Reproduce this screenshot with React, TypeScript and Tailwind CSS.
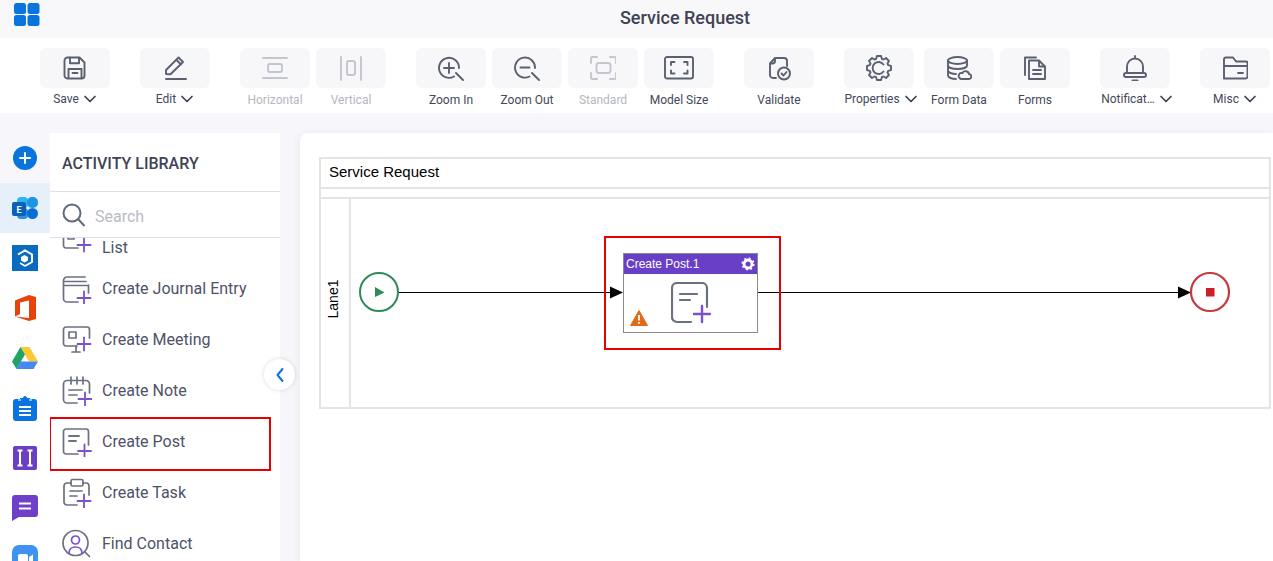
import type { ReactNode } from "react";

const Ico = ({ children, stroke = "#5b6070", size = 26 }: { children: ReactNode; stroke?: string; size?: number }) => (
  <svg width={size} height={size} viewBox="0 0 26 26" fill="none" stroke={stroke} strokeWidth="1.9" strokeLinecap="round" strokeLinejoin="round">
    {children}
  </svg>
);

const Chevron = () => (
  <svg width="14" height="8" viewBox="0 0 14 8" fill="none" stroke="#3f4254" strokeWidth="1.7" strokeLinecap="round" strokeLinejoin="round" className="shrink-0">
    <path d="M2 1.5 7 6.5 12 1.5" />
  </svg>
);

const Plus = ({ x = 0, y = 0 }: { x?: number; y?: number }) => (
  <path d={`M${x} ${y - 6.5}v13M${x - 6.5} ${y}h13`} stroke="#7b4fd0" strokeWidth="1.8" />
);

// 8 tooth gear outline for the Properties button
const gearPath = () => {
  const pts: string[] = [];
  for (let i = 0; i < 8; i++) {
    const a = (i * Math.PI) / 4;
    [[9.6, -0.3], [12.2, -0.17], [12.2, 0.17], [9.6, 0.3]].forEach(([r, d]) => {
      pts.push(`${(13 + r * Math.cos(a + d)).toFixed(2)} ${(13 + r * Math.sin(a + d)).toFixed(2)}`);
    });
  }
  return `M${pts.join("L")}Z`;
};

type Tool = { label: string; icon: ReactNode; menu?: boolean; off?: boolean; nudge?: string; ml?: string };

const tools: Tool[] = [
  {
    label: "Save",
    menu: true,
    icon: (
      <Ico>
        <path d="M5.5 2.5h12l5 5v13a3 3 0 0 1-3 3h-14a3 3 0 0 1-3-3v-15a3 3 0 0 1 3-3Z" />
        <path d="M8 2.8v5.4h9V2.8M6.5 23v-9h13v9M10.500 18h5" />
      </Ico>
    ),
  },
  {
    label: "Edit",
    menu: true,
    ml: "ml-[30px]",
    icon: (
      <Ico>
        <path d="M4 19v-4L16.500 2.500l4.500 4.500L8.500 19.200 4 19ZM14.500 5l4.500 4.500" />
        <path d="M4 24h20" strokeWidth="2" />
      </Ico>
    ),
  },
  {
    label: "Horizontal",
    off: true,
    ml: "ml-[30px]",
    icon: (
      <Ico stroke="#c3c5cf">
        <path d="M1 3h24M1 23h24" />
        <rect x="6" y="9" width="14" height="8" rx="2" />
      </Ico>
    ),
  },
  {
    label: "Vertical",
    off: true,
    ml: "ml-[6px]",
    icon: (
      <Ico stroke="#c3c5cf">
        <path d="M3 2v23M23 2v23" />
        <rect x="9" y="6" width="8" height="14" rx="2" />
      </Ico>
    ),
  },
  {
    label: "Zoom In",
    ml: "ml-[30px]",
    icon: (
      <Ico>
        <path d="M16 21.500a10 10 0 1 1 5-8.500M18 18l7 7M11 8v10M6 13h10" />
      </Ico>
    ),
  },
  {
    label: "Zoom Out",
    ml: "ml-[6px]",
    icon: (
      <Ico>
        <path d="M15.500 21.500a10 10 0 1 1 5.500-8.500M18 18l7 7M6.500 12.500h9" />
      </Ico>
    ),
  },
  {
    label: "Standard",
    off: true,
    ml: "ml-[6px]",
    icon: (
      <Ico stroke="#c3c5cf">
        <path d="M1 8V3.500A1.500 1.500 0 0 1 2.500 2H7M20 2h4.500A1.500 1.500 0 0 1 26 3.500V8M26 18v4.500a1.500 1.500 0 0 1-1.500 1.500H20M7 24H2.500A1.500 1.500 0 0 1 1 22.500V18" />
        <rect x="6.500" y="8" width="14" height="10" rx="2.500" />
      </Ico>
    ),
  },
  {
    label: "Model Size",
    ml: "ml-[6px]",
    icon: (
      <svg width="30" height="24" viewBox="0 0 30 24" fill="none" stroke="#5b6070" strokeWidth="1.900" strokeLinecap="round" strokeLinejoin="round">
        <rect x="1" y="1" width="28" height="21.500" rx="2" />
        <path d="M7 9V6h3.500M20 6h3.500v3M23.500 14.500V17.500H20M10.500 17.500H7v-3" />
      </svg>
    ),
  },
  {
    label: "Validate",
    ml: "ml-[30px]",
    icon: (
      <Ico>
        <path d="M10 23H7a3 3 0 0 1-3-3V8.500L9 3h9a3 3 0 0 1 3 3v5M9 3v3a2.500 2.500 0 0 1-2.500 2.500H4" />
        <circle cx="18" cy="18.500" r="6" />
        <path d="m15.500 18.500 2 2 3-3.500" />
      </Ico>
    ),
  },
  {
    label: "Properties",
    menu: true,
    nudge: "pl-[4px]",
    ml: "ml-[30px]",
    icon: (
      <Ico>
        <path d={gearPath()} />
        <path d="M17.500 9.500a6 6 0 1 0 0 7" />
      </Ico>
    ),
  },
  {
    label: "Form Data",
    ml: "ml-[10px]",
    icon: (
      <Ico>
        <ellipse cx="11.500" cy="5.500" rx="9.500" ry="3.500" />
        <path d="M2 5.500v15c0 2 4 3.500 8 3.500M2 10.500c0 2 4 3.500 9.500 3.500s9.500-1.500 9.500-3.500v-5M2 15.500c0 2 4 3.500 8 3.500" />
        <path d="M15 24h7.500a2.500 2.500 0 0 0 .5-5 3.500 3.500 0 0 0-6.500-1 3 3 0 0 0-1.500 6Z" />
      </Ico>
    ),
  },
  {
    label: "Forms",
    ml: "ml-[6px]",
    icon: (
      <Ico>
        <path d="M3 20V2.500h11" />
        <path d="M7 5.500h10l6 6V24H7V5.500ZM17 5.500v6h6M11 15h8M11 19h8" />
      </Ico>
    ),
  },
  {
    label: "Notificat…",
    menu: true,
    nudge: "pl-[4px]",
    ml: "ml-[30px]",
    icon: (
      <Ico>
        <path d="M13 1v2.500M5 18v-6.500a8 8 0 0 1 16 0V18" />
        <rect x="2" y="18" width="22" height="4" rx="2" />
        <path d="M10.500 25.500h5" />
      </Ico>
    ),
  },
  {
    label: "Misc",
    menu: true,
    ml: "ml-[30px]",
    icon: (
      <Ico>
        <path d="M2 24V5a2 2 0 0 1 2-2h7l3 4h10a1.500 1.500 0 0 1 1.500 1.500V22a2 2 0 0 1-2 2H2Z" transform="translate(0 -.500)" />
        <path d="M2 11h23M16 18h5" />
      </Ico>
    ),
  },
];

const ToolButton = ({ tool }: { tool: Tool }) => (
  <div className={`flex w-[70px] shrink-0 flex-col items-center ${tool.ml ?? ""}`}>
    <div className="flex h-10 w-full items-center justify-center rounded-md bg-[#f7f7fa]">{tool.icon}</div>
    <div className={`flex h-[22px] w-[84px] items-center justify-center gap-1 whitespace-nowrap text-xs ${tool.off ? "text-[#b5b7c0]" : "text-[#44475a]"} ${tool.menu ? "" : "pt-[1px]"} ${tool.nudge ?? ""}`}>
      <span>{tool.label}</span>
      {tool.menu && <Chevron />}
    </div>
  </div>
);

const railIcons: ReactNode[] = [
  <svg key="plus" width="24" height="24" viewBox="0 0 24 24">
    <circle cx="12" cy="12" r="12" fill="#0a74de" />
    <path d="M12 7v10M7 12h10" stroke="#fff" strokeWidth="2" strokeLinecap="round" />
  </svg>,
  <svg key="exchange" width="26" height="22" viewBox="0 0 26 22">
    <rect x="5" y="0" width="11" height="11" rx="4" fill="#2fb6f2" />
    <rect x="15" y="0" width="11" height="11" rx="5" fill="#1f93e4" />
    <rect x="5" y="11" width="11" height="11" rx="4" fill="#2a8fe6" />
    <rect x="15" y="11" width="11" height="11" rx="5.500" fill="#0a6fd2" />
    <rect x="0" y="5" width="14" height="14" rx="2" fill="#0a62b8" />
    <text x="7" y="15.500" textAnchor="middle" fontSize="9" fontWeight="700" fill="#fff" fontFamily="Roboto, sans-serif">E</text>
  </svg>,
  <svg key="hex" width="26" height="26" viewBox="0 0 26 26">
    <rect width="26" height="26" fill="#0a6cc0" />
    <path d="M6 9.500 13 5.500l7 4v7.500L13 21" fill="none" stroke="#fff" strokeWidth="2" />
    <path d="M13 21 8 18" fill="none" stroke="#fff" strokeWidth="1.500" />
    <path d="m12.500 10 3.500 2v3.500l-3.500 2-3.500-2V12Z" fill="#fff" />
  </svg>,
  <svg key="office" width="21" height="26" viewBox="0 0 21 26">
    <path d="M0 5.500 14 0l7 2v22l-7 2-14-4.500 14 1.500V5.500L5 7.500v11.500L0 21.500v-16Z" fill="#e8430d" />
  </svg>,
  <svg key="drive" width="26" height="23" viewBox="0 0 26 23">
    <path d="M8.500 0h9L26 14.500h-9L8.500 0Z" fill="#fcc934" />
    <path d="M8.500 0 13 7.500 4.500 22 0 14.500 8.500 0Z" fill="#1fa463" />
    <path d="M8.500 14.500H26L21.500 22h-17l4-7.500Z" fill="#4688f4" />
  </svg>,
  <svg key="clip" width="24" height="26" viewBox="0 0 24 26">
    <rect y="4" width="24" height="22" rx="3" fill="#0a74de" />
    <path d="M7 3h3a2 2 0 0 1 4 0h3v3H7V3Z" fill="#0a74de" />
    <path d="M5 5h3M16 5h3" stroke="#fff" strokeWidth="1" />
    <path d="M6 12h12M6 16h12M6 20h12" stroke="#fff" strokeWidth="2" />
  </svg>,
  <svg key="ii" width="24" height="24" viewBox="0 0 24 24">
    <rect width="24" height="24" rx="2" fill="#6a3fc4" />
    <path d="M4.500 4.500h5M7 4.500v15M4.500 19.500h5M14.500 4.500h5M17 4.500v15M14.500 19.500h5" stroke="#fff" strokeWidth="2" />
  </svg>,
  <svg key="chat" width="26" height="26" viewBox="0 0 26 26">
    <path d="M3 0h20a3 3 0 0 1 3 3v16a3 3 0 0 1-3 3H7l-7 4V3a3 3 0 0 1 3-3Z" fill="#6f3fc9" />
    <path d="M7 8.500h12M7 13.500h12" stroke="#fff" strokeWidth="2" />
  </svg>,
  <svg key="zoom" width="26" height="26" viewBox="0 0 26 26">
    <rect width="26" height="26" rx="7" fill="#3e92f0" />
    <rect x="6" y="9" width="10" height="10" rx="2" fill="#fff" />
    <path d="m17 12 4-2.500v9L17 16Z" fill="#fff" />
  </svg>,
];

const Sq = ({ children, className = "" }: { children: ReactNode; className?: string }) => (
  <svg width="30" height="30" viewBox="0 0 30 30" fill="none" stroke="#6b7082" strokeWidth="1.700" strokeLinecap="round" strokeLinejoin="round" className={`shrink-0 ${className}`}>
    {children}
  </svg>
);

const items: { label: string; icon: ReactNode; boxed?: boolean; short?: boolean }[] = [
  {
    label: "List",
    short: true,
    icon: (
      <Sq className="-translate-y-[10px]">
        <path d="M16 25H4a2.500 2.500 0 0 1-2.500-2.500V2" />
        <rect x="6" y="11" width="6" height="5" />
        <path d="M16 13h6" />
        <Plus x={22} y={22} />
      </Sq>
    ),
  },
  {
    label: "Create Journal Entry",
    icon: (
      <Sq>
        <path d="M16 28H5a3.500 3.500 0 0 1-3.500-3.500v-18A3.500 3.500 0 0 1 5 3h18M2 7.500h22M2 11.500h24M26.500 11v8" />
        <Plus x={22} y={24} />
      </Sq>
    ),
  },
  {
    label: "Create Meeting",
    icon: (
      <Sq>
        <path d="M15 21H4a2.500 2.500 0 0 1-2.500-2.500v-14A2.500 2.500 0 0 1 4 2h21a2.500 2.500 0 0 1 2.500 2.500V13M10 27h8M14 21v6" />
        <rect x="7" y="7" width="7" height="6" />
        <Plus x={22} y={19} />
      </Sq>
    ),
  },
  {
    label: "Create Note",
    icon: (
      <Sq>
        <path d="M15 27H5a3.500 3.500 0 0 1-3.500-3.500V8A3.500 3.500 0 0 1 5 4.500h19A3.500 3.500 0 0 1 27.500 8v9M9 1v7M15 1v7M21 1v7M7 14h13M7 19h8" />
        <Plus x={23} y={23} />
      </Sq>
    ),
  },
  {
    label: "Create Post",
    boxed: true,
    icon: (
      <Sq>
        <path d="M16 27H4a2.500 2.500 0 0 1-2.500-2.500v-20A2.500 2.500 0 0 1 4 2h20a2.500 2.500 0 0 1 2.500 2.500V18" />
        <path d="M7 9h10M7 14h7" strokeWidth="1.800" />
        <Plus x={22.500} y={24} />
      </Sq>
    ),
  },
  {
    label: "Create Task",
    icon: (
      <Sq>
        <path d="M15 27H5a3 3 0 0 1-3-3V8a3 3 0 0 1 3-3h4M21 5h3a3 3 0 0 1 3 3v9M8 13h12M8 18h7" />
        <rect x="9" y="1.500" width="12" height="6.500" rx="1.500" />
        <Plus x={22} y={23} />
      </Sq>
    ),
  },
  {
    label: "Find Contact",
    icon: (
      <Sq>
        <circle cx="13.500" cy="14" r="12.500" />
        <path d="m23 23 4.500 4.500" />
        <circle cx="13.500" cy="11" r="4" stroke="#7b4fd0" />
        <path d="M7 24c0-8 13-8 13 0" stroke="#7b4fd0" />
      </Sq>
    ),
  },
];

const Diagram = () => (
  <div className="relative flex-1">
    <svg width="900" height="205" viewBox="0 0 900 205" className="absolute -left-[1px] -top-[2px]" fill="none">
      <circle cx="29" cy="95" r="19" stroke="#2e8b57" strokeWidth="2" />
      <path d="m25 90 9.500 5.500L25 100Z" fill="#2e8b57" />
      <path d="M49 95.500h213" stroke="#000" />
      <path d="m260 89.500 13 6-13 6Z" fill="#000" />
      <path d="M408 95.500h422" stroke="#000" />
      <path d="m828 89.500 13 6-13 6Z" fill="#000" />
      <circle cx="860" cy="95" r="19" stroke="#c4383e" strokeWidth="2.200" />
      <rect x="856" y="91" width="8.500" height="8.500" fill="#cc1f26" />
    </svg>
    <div className="absolute left-[253px] top-[37px] h-[114px] w-[177px] border-2 border-[#e80000]" />
    <div className="absolute left-[272px] top-[54px] h-[80px] w-[135px] border border-[#8a8a8a] bg-white">
      <div className="flex h-[20px] items-center justify-between bg-[#6a3fc8] pl-[2px] pr-[2px] font-['Liberation_Sans',sans-serif] text-xs text-white">
        <span>Create Post.1</span>
        <svg width="14" height="14" viewBox="0 0 14 14">
          <circle cx="7" cy="7" r="4" fill="none" stroke="#fff" strokeWidth="2.800" />
          <circle cx="7" cy="7" r="5.800" fill="none" stroke="#fff" strokeWidth="1.500" strokeDasharray="2 2.550" />
        </svg>
      </div>
      <div className="relative flex h-[58px] items-center justify-center">
        <svg width="40" height="42" viewBox="0 0 40 42" fill="none" stroke="#6b7082" strokeWidth="2.200" strokeLinecap="round" strokeLinejoin="round">
          <path d="M20 40H6a5 5 0 0 1-5-5V6a5 5 0 0 1 5-5h25a5 5 0 0 1 5 5v19M9 12h17M9 18h10" />
          <path d="M31 24v16M23 32h16" stroke="#7b4fd0" strokeWidth="2.400" />
        </svg>
        <svg width="18" height="16" viewBox="0 0 18 16" className="absolute bottom-[6px] left-[6px]">
          <path d="M9 .500 17.500 15.500H.500Z" fill="#e06c1a" stroke="#e06c1a" strokeLinejoin="round" />
          <path d="M9 5v5.500M9 12v1.800" stroke="#fff" strokeWidth="1.800" />
        </svg>
      </div>
    </div>
  </div>
);

export default function App() {
  return (
    <div className="flex h-[561px] w-[1273px] flex-col overflow-hidden bg-[#f7f7fb] font-['Roboto',sans-serif]">
      <header className="relative flex h-[38px] shrink-0 items-center justify-center bg-[#f8f8fa] pb-[2px] pl-[97px]">
        <svg width="26" height="24" viewBox="0 0 26 24" className="absolute left-[14px] top-[2px]" fill="#0a74de">
          <rect width="12" height="11" rx="2.500" y="1" />
          <rect x="13.500" width="12" height="11" rx="2.500" y="1" />
          <rect y="13" width="12" height="11" rx="2.500" />
          <rect x="13.500" y="13" width="12" height="11" rx="2.500" />
        </svg>
        <h1 className="text-lg font-medium text-[#3f4254]">Service Request</h1>
      </header>

      <div className="flex h-[75px] shrink-0 bg-white pl-[40px] pt-[10px]">
        {tools.map((t) => (
          <ToolButton key={t.label} tool={t} />
        ))}
      </div>

      <div className="flex min-h-0 flex-1">
        <nav className="flex w-[50px] shrink-0 flex-col pt-[20px]">
          {railIcons.map((icon, i) => (
            <div
              key={i}
              className={`flex h-[50px] shrink-0 items-center justify-center ${i === 1 ? "bg-[#e6f0fa]" : i === 0 ? "" : "bg-white"}`}
            >
              {icon}
            </div>
          ))}
        </nav>

        <aside className="relative mt-[20px] flex w-[230px] shrink-0 flex-col bg-white">
          <div className="flex h-[59px] shrink-0 items-center border-b border-[#dfdfe8] pl-[12px] pt-[3px] text-base font-medium text-[#3f4254]">
            ACTIVITY LIBRARY
          </div>
          <div className="z-10 flex h-[46px] shrink-0 items-center gap-[10px] border-b border-[#dfdfe8] bg-white pl-[12px]">
            <svg width="23" height="24" viewBox="0 0 23 24" fill="none" stroke="#5f6b7d" strokeWidth="2" strokeLinecap="round">
              <circle cx="10" cy="10" r="8.500" />
              <path d="m16.500 16.500 5.500 6" />
            </svg>
            <span className="pt-[4px] text-base text-[#b9bbc4]">Search</span>
          </div>
          <div className="min-h-0 flex-1 overflow-hidden">
            <ul className="-mt-[6px] flex flex-col">
              {items.map((it) => (
                <li key={it.label} className={`relative flex shrink-0 items-center gap-[10px] pl-[12px] text-base text-[#4e5268] ${it.short ? "h-[31px]" : "h-[51px]"}`}>
                  {it.icon}
                  <span>{it.label}</span>
                  {it.boxed && <div className="absolute -left-[1px] right-[9px] top-[1px] h-[54px] border-2 border-[#e60000]" />}
                </li>
              ))}
            </ul>
          </div>
          <button className="absolute left-[214px] top-[226px] z-20 flex h-[31px] w-[31px] items-center justify-center rounded-full bg-white shadow-[0_0_4px_rgba(0,0,0,0.15)]">
            <svg width="10" height="16" viewBox="0 0 10 16" fill="none" stroke="#0a74de" strokeWidth="2" strokeLinecap="round" strokeLinejoin="round">
              <path d="M7.500 2 2.500 8l5 6" />
            </svg>
          </button>
        </aside>

        <main className="ml-[20px] mt-[20px] min-w-0 flex-1 rounded-tl-lg bg-white pl-[19px] pt-[24px] shadow-[-3px_0_6px_rgba(0,0,0,0.04)]">
          <div className="flex h-[252px] w-[952px] flex-col border-2 border-[#e4e4e4] font-['Liberation_Sans',sans-serif] text-black">
            <div className="flex h-[28px] shrink-0 items-center pb-[1px] pl-[8px] text-[15px]">Service Request</div>
            <div className="h-[12px] shrink-0 border-y-2 border-[#e4e4e4]" />
            <div className="flex min-h-0 flex-1">
              <div className="flex w-[30px] shrink-0 items-center justify-center border-r-2 border-[#e4e4e4] pb-[8px] pr-[3px]">
                <span className="-rotate-90 whitespace-nowrap text-sm">Lane1</span>
              </div>
              <Diagram />
            </div>
          </div>
        </main>
      </div>
    </div>
  );
}
